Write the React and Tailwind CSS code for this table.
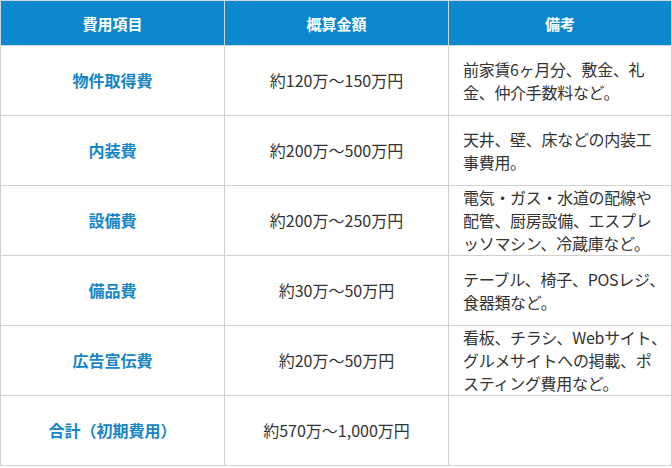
const rows = [
  { item: "物件取得費", cost: "約120万〜150万円", note: ["前家賃6ヶ月分、敷金、礼", "金、仲介手数料など。"] },
  { item: "内装費", cost: "約200万〜500万円", note: ["天井、壁、床などの内装工", "事費用。"] },
  { item: "設備費", cost: "約200万〜250万円", note: ["電気・ガス・水道の配線や", "配管、厨房設備、エスプレ", "ッソマシン、冷蔵庫など。"] },
  { item: "備品費", cost: "約30万〜50万円", note: ["テーブル、椅子、POSレジ、", "食器類など。"] },
  { item: "広告宣伝費", cost: "約20万〜50万円", note: ["看板、チラシ、Webサイト、", "グルメサイトへの掲載、ポ", "スティング費用など。"] },
  { item: "合計（初期費用）", cost: "約570万〜1,000万円", note: [] },
];

export default function App() {
  return (
    <div className="w-[672px] h-[468px] bg-white" style={{ fontFamily: '"Noto Sans CJK JP", "Noto Sans", sans-serif' }}>
      <table className="w-[672px] border-collapse table-fixed text-[16px] leading-[23px] text-[#333]">
        <thead>
          <tr className="h-[45px] bg-[#0a87cd] text-white text-[15px]">
            <th className="w-[224px] border border-[#cfd8de] font-bold">費用項目</th>
            <th className="w-[224px] border border-[#cfd8de] font-bold">概算金額</th>
            <th className="border border-[#cfd8de] font-bold">備考</th>
          </tr>
        </thead>
        <tbody>
          {rows.map((r) => (
            <tr key={r.item} className="h-[70px]">
              <td className="border border-[#d0d0d0] text-center font-bold text-[#1685c8]">{r.item}</td>
              <td className="border border-[#d0d0d0] text-center">{r.cost}</td>
              <td className="border border-[#d0d0d0] pl-[14px] pr-[4px] text-left whitespace-nowrap tracking-[-0.3px]">
                {r.note.map((line, i) => (
                  <div key={i}>{line}</div>
                ))}
              </td>
            </tr>
          ))}
        </tbody>
      </table>
    </div>
  );
}
